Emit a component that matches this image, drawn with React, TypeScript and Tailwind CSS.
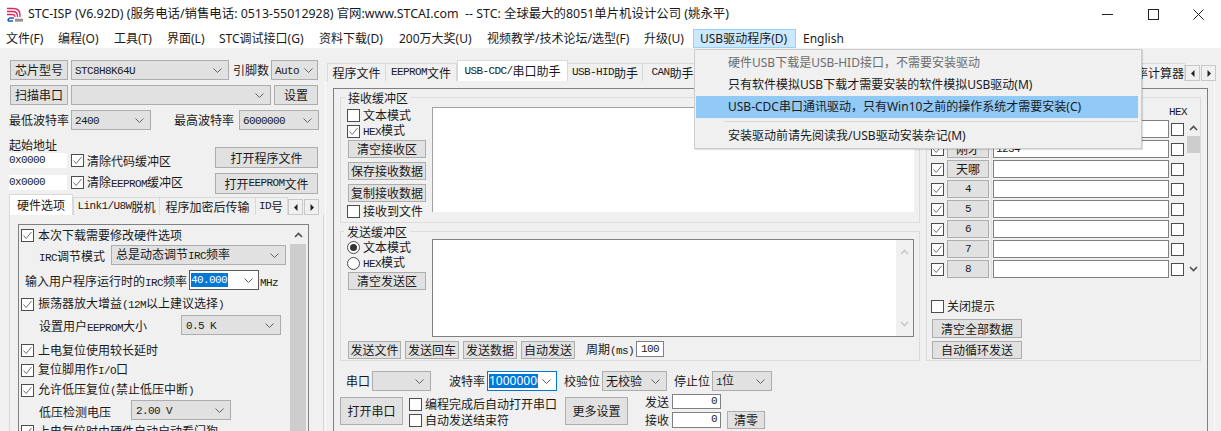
import React from 'react';

const menus = [
  { label: '文件(F)', cls: 'w-[52px]' },
  { label: '编程(O)', cls: 'w-[56px]' },
  { label: '工具(T)', cls: 'w-[53px]' },
  { label: '界面(L)', cls: 'w-[52px]' },
  { label: 'STC调试接口(G)', cls: 'w-[100px]' },
  { label: '资料下载(D)', cls: 'w-[80px]' },
  { label: '200万大奖(U)', cls: 'w-[88px]' },
  { label: '视频教学/技术论坛/选型(F)', cls: 'w-[157px]' },
  { label: '升级(U)', cls: 'w-[49px]' },
];

// the old dialog font has half width latin, so latin runs get their own span
function Sim({ text }: { text: string }) {
  const parts = text.split(/([\x00-\x7f]+)/).filter(Boolean);
  return (
    <>
      {parts.map((p, i) =>
        /^[\x00-\x7f]+$/.test(p) ? (
          <span key={i} className="font-['Liberation_Mono',monospace] text-[11px] tracking-[-0.6px]">
            {p}
          </span>
        ) : (
          <span key={i}>{p}</span>
        )
      )}
    </>
  );
}

function Btn({ text, className = '' }: { text: string; className?: string }) {
  return (
    <div className={`flex items-center justify-center shrink-0 bg-[#e1e1e1] border border-[#adadad] whitespace-nowrap ${className}`}>
      <Sim text={text} />
    </div>
  );
}

function Chevron({ light = false }: { light?: boolean }) {
  return (
    <svg width="9" height="5" viewBox="0 0 9 5" className="shrink-0">
      <path d="M0.5 0.5 L4.5 4.5 L8.5 0.5" fill="none" stroke={light ? '#b5b5b5' : '#606060'} />
    </svg>
  );
}

function Select({ value = '', className = '', pad = 'pr-[6px]' }: { value?: string; className?: string; pad?: string }) {
  return (
    <div className={`flex items-center justify-between shrink-0 h-[20px] pl-[3px] bg-[#e1e1e1] border border-[#adadad] whitespace-nowrap ${pad} ${className}`}>
      <span><Sim text={value} /></span>
      <Chevron />
    </div>
  );
}

function Combo({ value, className = '', border = 'border-[#7a7a7a]', textW = 'w-[40px]', sans = false }: { value: string; className?: string; border?: string; textW?: string; sans?: boolean }) {
  return (
    <div className={`flex items-center justify-between shrink-0 h-[20px] pl-[1px] pr-[5px] bg-white border ${border} ${className}`}>
      <span className={`h-[14px] flex items-center bg-[#0078d7] text-white overflow-hidden whitespace-nowrap ${textW}`}>
        {sans ? <span className="font-['Noto_Sans',sans-serif]">{value}</span> : <Sim text={value} />}
      </span>
      <Chevron />
    </div>
  );
}

function Check({ checked = false }: { checked?: boolean }) {
  return (
    <svg width="13" height="13" viewBox="0 0 13 13" className="shrink-0">
      <rect x="0.5" y="0.5" width="12" height="12" fill="#fff" stroke="#4d4d4d" />
      {checked && <path d="M2.5 6.5 L5.2 9.5 L10.5 3" fill="none" stroke="#707070" />}
    </svg>
  );
}

function Radio({ on = false }: { on?: boolean }) {
  return (
    <svg width="13" height="13" viewBox="0 0 13 13" className="shrink-0">
      <circle cx="6.5" cy="6.5" r="6" fill="#fff" stroke="#4d4d4d" />
      {on && <circle cx="6.5" cy="6.5" r="3.5" fill="#333" />}
    </svg>
  );
}

function CheckRow({ text, checked = false, className = '' }: { text: string; checked?: boolean; className?: string }) {
  return (
    <div className={`flex items-center gap-[3px] whitespace-nowrap ${className}`}>
      <Check checked={checked} />
      <span><Sim text={text} /></span>
    </div>
  );
}

function RadioRow({ text, on = false }: { text: string; on?: boolean }) {
  return (
    <div className="flex items-center gap-[3px] h-[16px] whitespace-nowrap">
      <Radio on={on} />
      <span><Sim text={text} /></span>
    </div>
  );
}

function TabArrows() {
  return (
    <div className="flex gap-[1px] shrink-0">
      <div className="w-[15px] h-[16px] flex items-center justify-center bg-[#f0f0f0] border border-[#c8c8c8]">
        <svg width="4" height="7" viewBox="0 0 4 7"><path d="M3.5 0 L0 3.5 L3.5 7 Z" fill="#222" /></svg>
      </div>
      <div className="w-[15px] h-[16px] flex items-center justify-center bg-[#f0f0f0] border border-[#c8c8c8]">
        <svg width="4" height="7" viewBox="0 0 4 7"><path d="M0.5 0 L4 3.5 L0.5 7 Z" fill="#222" /></svg>
      </div>
    </div>
  );
}

function Tab({ text, className = '' }: { text: string; className?: string }) {
  return (
    <div className={`flex items-center justify-center h-[18px] shrink-0 bg-[#f0f0f0] border border-[#d9d9d9] border-b-0 whitespace-nowrap ${className}`}>
      <Sim text={text} />
    </div>
  );
}

function ActiveTab({ text, className = '' }: { text: string; className?: string }) {
  return (
    <div className={`flex items-center justify-center h-[21px] -mt-[2px] shrink-0 bg-white border border-[#d9d9d9] border-b-0 whitespace-nowrap ${className}`}>
      <Sim text={text} />
    </div>
  );
}

function Arrow({ up = false, faint = false }: { up?: boolean; faint?: boolean }) {
  return (
    <svg width="9" height="6" viewBox="0 0 9 6">
      <path d={up ? 'M1 5 L4.5 1.5 L8 5' : 'M1 1 L4.5 4.5 L8 1'} fill="none" stroke={faint ? '#c8c8c8' : '#505050'} strokeWidth="1.6" />
    </svg>
  );
}

function Legend({ text, className = '' }: { text: string; className?: string }) {
  return (
    <span className={`absolute -top-[8px] px-[3px] bg-[#f0f0f0] leading-[15px] whitespace-nowrap ${className}`}>{text}</span>
  );
}

function SendRow({ label, value = '' }: { label: string; value?: string }) {
  return (
    <div className="flex items-center h-[20px]">
      <Check checked />
      <Btn text={label} className="w-[42px] h-[18px] ml-[3px]" />
      <div className="self-stretch w-[1px] bg-[#cfe4f3] ml-[2px]" />
      <div className="flex items-center w-[176px] h-[18px] ml-[1px] pl-[2px] bg-white border border-[#808080] overflow-hidden">
        <Sim text={value} />
      </div>
      <div className="ml-[2px]"><Check /></div>
    </div>
  );
}

function Field({ value, className = '' }: { value: string; className?: string }) {
  return (
    <div className={`flex items-center justify-end pr-[3px] bg-white border border-[#808080] shrink-0 ${className}`}>
      <Sim text={value} />
    </div>
  );
}

function HardwareOptions() {
  return (
    <div className="flex flex-col flex-1 min-w-0 pl-[2px]">
      <CheckRow checked text="本次下载需要修改硬件选项" className="h-[20px] shrink-0 gap-[4px]" />
      <div className="flex items-center h-[20px] shrink-0 pl-[18px]">
        <span className="w-[72px] pt-[3px] whitespace-nowrap"><Sim text="IRC调节模式" /></span>
        <Select value="总是动态调节IRC频率" className="w-[175px] pl-[4px]" />
      </div>
      <div className="flex items-center h-[20px] mt-[5px] shrink-0 pl-[4px]">
        <span className="w-[164px] pt-[3px] whitespace-nowrap"><Sim text="输入用户程序运行时的IRC频率" /></span>
        <Combo value="40.000" className="w-[70px]" textW="w-[37px]" border="border-[#5a5a5a]" />
        <span className="ml-[1px] pt-[3px] whitespace-nowrap"><Sim text="MHz" /></span>
      </div>
      <CheckRow checked text="振荡器放大增益(12M以上建议选择)" className="h-[20px] mt-[4px] shrink-0 gap-[4px]" />
      <div className="flex items-center h-[20px] mt-[1px] shrink-0 pl-[18px]">
        <span className="w-[142px] pt-[3px] whitespace-nowrap"><Sim text="设置用户EEPROM大小" /></span>
        <Select value="0.5 K" className="w-[100px] pl-[4px]" />
      </div>
      <CheckRow checked text="上电复位使用较长延时" className="h-[20px] mt-[5px] shrink-0 gap-[4px]" />
      <CheckRow checked text="复位脚用作I/O口" className="h-[20px] shrink-0 gap-[4px]" />
      <CheckRow checked text="允许低压复位(禁止低压中断)" className="h-[20px] shrink-0 gap-[4px]" />
      <div className="flex items-center h-[20px] shrink-0 pl-[18px]">
        <span className="w-[92px] pt-[3px] whitespace-nowrap"><Sim text="低压检测电压" /></span>
        <Select value="2.00 V" className="w-[100px] pl-[4px]" />
      </div>
      <CheckRow text="上电复位时由硬件自动启动看门狗" checked className="h-[20px] mt-[1px] shrink-0 gap-[4px]" />
    </div>
  );
}

function LeftPanel() {
  return (
    <div className="w-[325px] shrink-0 pt-[12px] flex flex-col">
      <div className="flex items-center h-[20px] pl-[10px]">
        <Btn text="芯片型号" className="w-[58px] h-[20px]" />
        <Select value="STC8H8K64U" className="w-[158px] ml-[3px]" />
        <span className="ml-[4px] whitespace-nowrap">引脚数</span>
        <Select value="Auto" className="w-[47px] ml-[2px]" pad="pr-[4px]" />
      </div>
      <div className="flex items-center h-[20px] mt-[5px] pl-[10px]">
        <Btn text="扫描串口" className="w-[58px] h-[20px]" />
        <Select className="w-[200px] ml-[3px]" />
        <Btn text="设置" className="w-[44px] h-[20px] ml-[3px]" />
      </div>
      <div className="flex items-center h-[20px] mt-[5px] pl-[9px]">
        <span className="w-[62px] whitespace-nowrap">最低波特率</span>
        <Select value="2400" className="w-[80px]" />
        <span className="ml-[23px] w-[65px] whitespace-nowrap">最高波特率</span>
        <Select value="6000000" className="w-[80px]" />
      </div>
      <div className="flex h-[67px] pl-[9px]">
        <div className="w-[206px] pt-[7px] flex flex-col">
          <span className="h-[16px] leading-[16px]">起始地址</span>
          <div className="flex items-center h-[15px]">
            <div className="w-[58px] h-[15px] bg-white flex items-center"><Sim text="0x0000" /></div>
            <CheckRow checked text="清除代码缓冲区" className="ml-[4px]" />
          </div>
          <div className="flex items-center h-[15px] mt-[7px]">
            <div className="w-[58px] h-[15px] bg-white flex items-center"><Sim text="0x0000" /></div>
            <CheckRow checked text="清除EEPROM缓冲区" className="ml-[4px]" />
          </div>
        </div>
        <div className="pt-[17px] flex flex-col gap-[5px]">
          <Btn text="打开程序文件" className="w-[103px] h-[21px]" />
          <Btn text="打开EEPROM文件" className="w-[103px] h-[21px]" />
        </div>
      </div>
      <div className="flex items-end h-[18px] pl-[9px]">
        <ActiveTab text="硬件选项" className="w-[64px]" />
        <Tab text="Link1/U8W脱机" className="w-[87px]" />
        <Tab text="程序加密后传输" className="w-[96px] border-l-0" />
        <Tab text="ID号" className="w-[32px] border-l-0 justify-start pl-[3px]" />
        <TabArrows />
      </div>
      <div className="flex-1 min-h-0 ml-[9px] w-[315px] pl-[8px] pt-[9px] border-x border-[#d9d9d9]">
        <div className="flex w-[291px] h-[240px] border border-[#808080]">
          <HardwareOptions />
          <div className="w-[16px] mr-[2px] shrink-0 flex flex-col">
            <div className="h-[19px] flex items-center justify-center"><Arrow up /></div>
            <div className="flex-1 bg-[#cdcdcd]" />
          </div>
        </div>
      </div>
    </div>
  );
}

function ReceiveGroup() {
  return (
    <div className="relative w-[580px] h-[126px] shrink-0 flex border border-[#dcdcdc] pl-[6px] pt-[9px]">
      <Legend text="接收缓冲区" className="left-[4px]" />
      <div className="w-[85px] shrink-0 flex flex-col">
        <CheckRow text="文本模式" className="h-[16px]" />
        <CheckRow checked text="HEX模式" className="h-[16px]" />
        <Btn text="清空接收区" className="w-[78px] h-[18px] mt-[1px] ml-[1px]" />
        <Btn text="保存接收数据" className="w-[78px] h-[18px] mt-[4px] ml-[1px]" />
        <Btn text="复制接收数据" className="w-[78px] h-[18px] mt-[4px] ml-[1px]" />
        <CheckRow text="接收到文件" className="h-[16px] mt-[1px]" />
      </div>
      <div className="w-[482px] h-[105px] bg-white border-t border-l border-[#a0a0a0]" />
    </div>
  );
}

function SendGroup() {
  return (
    <div className="relative w-[580px] h-[130px] shrink-0 mt-[8px] flex flex-col border border-[#dcdcdc] pl-[6px] pt-[7px]">
      <Legend text="发送缓冲区" className="left-[3px]" />
      <div className="flex h-[98px]">
        <div className="w-[85px] shrink-0 flex flex-col">
          <RadioRow on text="文本模式" />
          <RadioRow text="HEX模式" />
          <Btn text="清空发送区" className="w-[78px] h-[18px] mt-[1px] ml-[1px]" />
        </div>
        <div className="flex justify-end w-[482px] h-[98px] bg-white border border-[#808080]">
          <div className="w-[17px] flex flex-col justify-between items-center py-[9px] bg-[#f0f0f0]">
            <Arrow up faint />
            <Arrow faint />
          </div>
        </div>
      </div>
      <div className="flex items-center h-[18px] mt-[4px] ml-[1px]">
        <Btn text="发送文件" className="w-[53px] h-[18px]" />
        <Btn text="发送回车" className="w-[54px] h-[18px] ml-[4px]" />
        <Btn text="发送数据" className="w-[54px] h-[18px] ml-[4px]" />
        <Btn text="自动发送" className="w-[54px] h-[18px] ml-[4px]" />
        <span className="ml-[11px] w-[50px] whitespace-nowrap"><Sim text="周期(ms)" /></span>
        <Field value="100" className="w-[28px] h-[16px] !justify-center !pr-0 -mt-[2px]" />
      </div>
    </div>
  );
}

function SerialControls() {
  return (
    <div className="flex flex-col">
      <div className="flex items-center h-[20px] mt-[10px] pl-[6px]">
        <span className="w-[26px]">串口</span>
        <Select className="w-[59px]" />
        <span className="ml-[18px] w-[38px] whitespace-nowrap">波特率</span>
        <Combo value="10000000" sans className="w-[70px]" border="border-[#0078d7]" textW="w-[49px]" />
        <span className="ml-[7px] w-[38px] whitespace-nowrap">校验位</span>
        <Select value="无校验" className="w-[65px]" />
        <span className="ml-[7px] w-[38px] whitespace-nowrap">停止位</span>
        <Select value="1位" className="w-[60px]" />
      </div>
      <div className="flex h-[34px] mt-[4px]">
        <Btn text="打开串口" className="w-[63px] h-[28px] mt-[2px]" />
        <div className="w-[156px] ml-[6px] flex flex-col pt-[1px]">
          <CheckRow text="编程完成后自动打开串口" className="h-[16px]" />
          <CheckRow text="自动发送结束符" className="h-[16px]" />
        </div>
        <Btn text="更多设置" className="w-[63px] h-[28px] mt-[2px]" />
        <div className="ml-[17px] w-[77px] flex flex-col gap-[3px] -mt-[1px]">
          <div className="flex items-center h-[15px]">
            <span className="w-[27px]">发送</span>
            <Field value="0" className="w-[49px] h-[15px]" />
          </div>
          <div className="flex items-center h-[15px]">
            <span className="w-[27px]">接收</span>
            <Field value="0" className="w-[49px] h-[16px]" />
          </div>
        </div>
        <Btn text="清零" className="w-[38px] h-[18px] ml-[5px] mt-[16px]" />
      </div>
    </div>
  );
}

function MultiSend() {
  return (
    <div className="w-[275px] h-[264px] shrink-0 ml-[6px] flex flex-col border border-[#dcdcdc] pl-[4px] pt-[7px]">
      <div className="h-[14px] pl-[238px] flex items-center"><Sim text="HEX" /></div>
      <div className="flex">
        <div className="flex flex-col w-[253px] shrink-0">
          <SendRow label="" />
          <SendRow label="刚才" value="1234" />
          <SendRow label="天哪" />
          <SendRow label="4" />
          <SendRow label="5" />
          <SendRow label="6" />
          <SendRow label="7" />
          <SendRow label="8" />
        </div>
        <div className="w-[13px] ml-[3px] flex flex-col items-center">
          <div className="h-[17px] flex items-center"><Arrow up /></div>
          <div className="w-[13px] h-[17px] bg-[#cdcdcd]" />
          <div className="flex-1 flex items-end pb-[7px]"><Arrow /></div>
        </div>
      </div>
      <CheckRow text="关闭提示" className="h-[16px] mt-[19px] gap-[2px]" />
      <Btn text="清空全部数据" className="w-[90px] h-[19px] mt-[5px] ml-[1px]" />
      <Btn text="自动循环发送" className="w-[90px] h-[18px] mt-[3px] ml-[1px]" />
    </div>
  );
}

function RightPanel() {
  return (
    <div className="flex-1 min-w-0 pt-[14px] flex flex-col">
      <div className="flex items-end h-[19px] pl-[2px] w-[891px]">
        <Tab text="程序文件" className="w-[59px]" />
        <Tab text="EEPROM文件" className="w-[71px] border-l-0" />
        <ActiveTab text="USB-CDC/串口助手" className="w-[111px]" />
        <Tab text="USB-HID助手" className="w-[75px] border-l-0" />
        <Tab text="CAN助手" className="w-[60px] border-l-0" />
        <div className="flex-1" />
        <Tab text="波特率计算器" className="w-[73px] border-l-0" />
        <TabArrows />
      </div>
      <div className="flex-1 min-h-0 w-[890px] pl-[7px] pt-[7px] border-x border-[#fafafa]">
        <div className="w-[875px] h-[350px] border border-[#808080] pl-[6px] pt-[8px] flex">
          <div className="flex flex-col w-[580px] shrink-0">
            <ReceiveGroup />
            <SendGroup />
            <SerialControls />
          </div>
          <MultiSend />
        </div>
      </div>
    </div>
  );
}

function UsbMenu() {
  return (
    <div className="absolute left-[1px] top-[20px] z-20 w-[448px] h-[100px] flex flex-col bg-[#f0f0f0] border border-[#cccccc] pl-[1px] pr-[3px] shadow-[1px_1px_1px_rgba(0,0,0,0.12)]">
      <div className="h-[23px] mt-[1px] pl-[32px] flex items-center text-[#6d6d6d] whitespace-nowrap">硬件USB下载是USB-HID接口，不需要安装驱动</div>
      <div className="h-[22px] pl-[32px] flex items-center whitespace-nowrap">只有软件模拟USB下载才需要安装的软件模拟USB驱动(M)</div>
      <div className="h-[22px] pl-[32px] flex items-center bg-[#91c9f7] whitespace-nowrap">USB-CDC串口通讯驱动，只有Win10之前的操作系统才需要安装(C)</div>
      <div className="h-[1px] mt-[3px] ml-[28px] bg-[#d7d7d7] shrink-0" />
      <div className="h-[22px] mt-[3px] pl-[32px] flex items-center whitespace-nowrap">安装驱动前请先阅读我/USB驱动安装杂记(M)</div>
    </div>
  );
}

export default function App() {
  return (
    <div className="relative w-[1221px] h-[431px] overflow-hidden flex flex-col bg-[#f0f0f0] text-[#1a1a1a] text-[12px] leading-none font-['Noto_Sans_CJK_SC',sans-serif]">
      {/* title bar */}
      <div className="h-[29px] shrink-0 bg-white flex items-center pl-[7px] font-['Noto_Sans','Noto_Sans_CJK_SC',sans-serif]">
        <svg width="16" height="15" viewBox="0 0 16 15" className="shrink-0">
          <path d="M0 1.5 H6 Q13 1.5 13 8 V10" fill="none" stroke="#e0245e" strokeWidth="1.3" />
          <path d="M0 4.5 H5.5 Q10.5 4.5 10.5 9 V10" fill="none" stroke="#e0245e" strokeWidth="1.3" />
          <path d="M0 7.5 H5 Q8 7.5 8 10" fill="none" stroke="#e0245e" strokeWidth="1.3" />
          <path d="M1 14 Q1 11 4 11 H7 M1 14 H6" fill="none" stroke="#1f5fc4" strokeWidth="1.5" />
          <path d="M9 11.5 V15 M11 11.5 V15 M13 11.5 V15 M15 11.5 V15 M8 13 H16" stroke="#555" strokeWidth="0.8" />
        </svg>
        <span className="ml-[5px] whitespace-pre text-[12.4px]">STC-ISP (V6.92D) (服务电话/销售电话: 0513-55012928) 官网:www.STCAI.com  -- STC: 全球最大的8051单片机设计公司 (姚永平)</span>
        <div className="flex-1" />
        <svg width="11" height="11" viewBox="0 0 11 11" className="mr-[35px]"><path d="M0 5.5 H11" stroke="#222" /></svg>
        <svg width="11" height="11" viewBox="0 0 11 11" className="mr-[34px]"><rect x="0.5" y="0.5" width="10" height="10" fill="none" stroke="#222" /></svg>
        <svg width="11" height="11" viewBox="0 0 11 11" className="mr-[17px]"><path d="M0.5 0.5 L10.5 10.5 M10.5 0.5 L0.5 10.5" stroke="#222" /></svg>
      </div>
      {/* menu bar */}
      <div className="h-[19px] shrink-0 bg-white flex items-center pl-[6px] font-['Noto_Sans','Noto_Sans_CJK_SC',sans-serif]">
        {menus.map((m) => (
          <span key={m.label} className={`${m.cls} whitespace-nowrap`}>{m.label}</span>
        ))}
        <div className="relative">
          <div className="w-[103px] h-[19px] flex items-center pl-[6px] bg-[#cce8ff] border border-[#99d1ff] whitespace-nowrap">USB驱动程序(D)</div>
          <UsbMenu />
        </div>
        <span className="ml-[7px]">English</span>
      </div>
      <div className="flex-1 min-h-0 flex">
        <LeftPanel />
        <RightPanel />
      </div>
    </div>
  );
}
